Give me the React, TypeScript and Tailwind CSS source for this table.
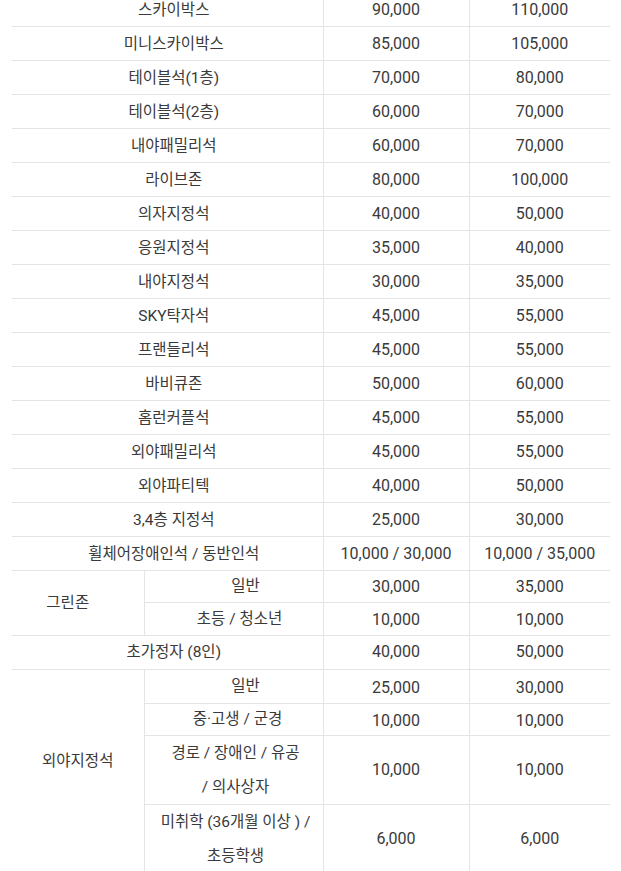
import React from "react";

const simpleRows: [string, string, string][] = [
  ["스카이박스", "90,000", "110,000"],
  ["미니스카이박스", "85,000", "105,000"],
  ["테이블석(1층)", "70,000", "80,000"],
  ["테이블석(2층)", "60,000", "70,000"],
  ["내야패밀리석", "60,000", "70,000"],
  ["라이브존", "80,000", "100,000"],
  ["의자지정석", "40,000", "50,000"],
  ["응원지정석", "35,000", "40,000"],
  ["내야지정석", "30,000", "35,000"],
  ["SKY탁자석", "45,000", "55,000"],
  ["프랜들리석", "45,000", "55,000"],
  ["바비큐존", "50,000", "60,000"],
  ["홈런커플석", "45,000", "55,000"],
  ["외야패밀리석", "45,000", "55,000"],
  ["외야파티텍", "40,000", "50,000"],
  ["3,4층 지정석", "25,000", "30,000"],
  ["휠체어장애인석 / 동반인석", "10,000 / 30,000", "10,000 / 35,000"],
];

const line = "border-[#e4e4e4]";
const label = `text-[15.5px] text-center border-b border-r ${line}`;
const num = `text-[16px] text-center border-b border-r ${line}`;
const last = `text-[16px] text-center border-b ${line}`;

export default function App() {
  return (
    <div className="bg-white w-[621px] h-[871px] overflow-hidden font-[Roboto,'Noto_Sans_CJK_KR',sans-serif] text-[#3a3a3a]">
      <table className="ml-[12px] -mt-[8px] w-[598px] table-fixed border-collapse leading-[20px]">
        <colgroup>
          <col className="w-[132px]" />
          <col className="w-[179px]" />
          <col className="w-[146px]" />
          <col className="w-[141px]" />
        </colgroup>
        <tbody>
          {simpleRows.map(([name, a, b]) => (
            <tr key={name} className="h-[34px]">
              <td colSpan={2} className={`${label} pl-[13px] pt-[2px]`}>
                {name}
              </td>
              <td className={`${num} pt-[2px]`}>{a}</td>
              <td className={`${last} pt-[2px]`}>{b}</td>
            </tr>
          ))}

          {/* 그린존 */}
          <tr className="h-[32px]">
            <td rowSpan={2} className={`${label} pr-[20px]`}>
              그린존
            </td>
            <td className={`${label} pl-[24px]`}>일반</td>
            <td className={`${num} pt-[2px]`}>30,000</td>
            <td className={`${last} pt-[2px]`}>35,000</td>
          </tr>
          <tr className="h-[33px]">
            <td className={`${label} pl-[12px]`}>초등 / 청소년</td>
            <td className={`${num} pt-[2px]`}>10,000</td>
            <td className={`${last} pt-[2px]`}>10,000</td>
          </tr>

          <tr className="h-[34px]">
            <td colSpan={2} className={`${label} pl-[13px]`}>
              초가정자 (8인)
            </td>
            <td className={num}>40,000</td>
            <td className={last}>50,000</td>
          </tr>

          {/* 외야지정석 */}
          <tr className="h-[34px]">
            <td rowSpan={4} className={`${label} pb-[20px]`}>
              외야지정석
            </td>
            <td className={`${label} pl-[24px]`}>일반</td>
            <td className={`${num} pt-[4px]`}>25,000</td>
            <td className={`${last} pt-[4px]`}>30,000</td>
          </tr>
          <tr className="h-[32px]">
            <td className={`${label} pl-[8px]`}>중·고생 / 군경</td>
            <td className={`${num} pt-[4px]`}>10,000</td>
            <td className={`${last} pt-[4px]`}>10,000</td>
          </tr>
          <tr className="h-[67px]">
            <td className={`${label} pl-[4px] leading-[34px]`}>
              경로 / 장애인 / 유공
              <br />/ 의사상자
            </td>
            <td className={num}>10,000</td>
            <td className={last}>10,000</td>
          </tr>
          <tr className="h-[68px]">
            <td className={`${label} pl-[4px] leading-[34px]`}>
              미취학 (36개월 이상 ) /
              <br />
              초등학생
            </td>
            <td className={num}>6,000</td>
            <td className={last}>6,000</td>
          </tr>
        </tbody>
      </table>
    </div>
  );
}
